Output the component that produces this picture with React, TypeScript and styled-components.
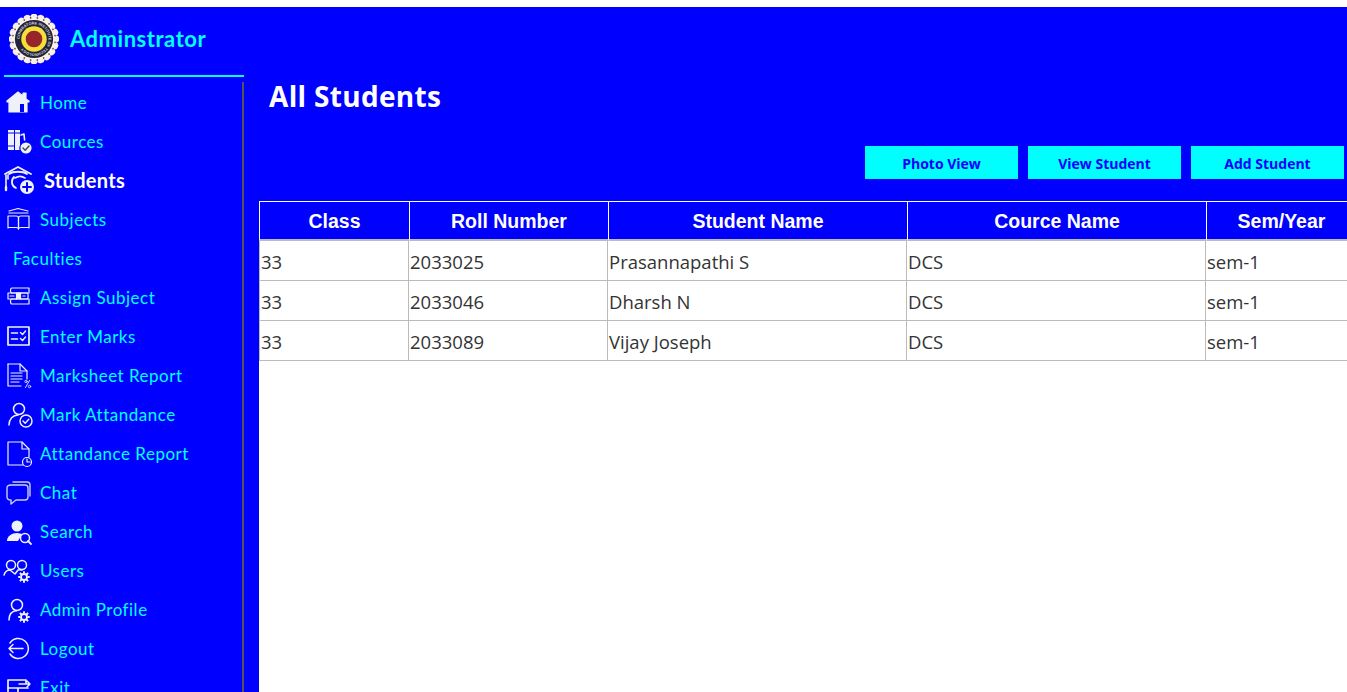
import React from "react";
import styled, { createGlobalStyle } from "styled-components";

const Global = createGlobalStyle`
  html, body { margin: 0; padding: 0; height: 100%; background: #fff; overflow: hidden; }
  #root { height: 100%; }
`;

const Page = styled.div`
  height: 692px;
  padding-top: 7px;
  box-sizing: border-box;
  overflow: hidden;
  background: #fff;
`;
const Shell = styled.div`
  display: flex;
  height: 685px;
  background: #0000ff;
`;
const Sidebar = styled.aside`
  width: 259px;
  flex: none;
  display: flex;
  flex-direction: column;
  overflow: hidden;
`;
const Brand = styled.div`
  height: 68px;
  flex: none;
  display: flex;
  align-items: center;
  gap: 11px;
  padding: 0 0 5px 9px;
  box-sizing: border-box;
`;
const BrandName = styled.span`
  font: 700 22px/1 Lato, "Liberation Sans", sans-serif;
  letter-spacing: 0.53px;
  color: #00ffff;
`;
const Divider = styled.hr`
  width: 240px;
  height: 2px;
  flex: none;
  margin: 0 0 5px 4px;
  border: 0;
  background: #00ffff;
`;
const Nav = styled.nav`
  width: 242px;
  flex: 1 0 auto;
  padding-top: 1px;
  border-right: 2px solid #555;
`;
const NavRow = styled.a<{ $active?: boolean; $plain?: boolean }>`
  display: flex;
  align-items: center;
  height: 39px;
  box-sizing: border-box;
  padding-left: ${(p) => (p.$plain ? "13px" : p.$active ? "4px" : "5px")};
  padding-bottom: ${(p) => (p.$active ? "2px" : "0")};
  gap: ${(p) => (p.$active ? "10px" : "8px")};
  color: ${(p) => (p.$active ? "#fff" : "#00ffff")};
  font: ${(p) => (p.$active ? "700 20px" : "400 17px")}/1 Lato, "Liberation Sans", sans-serif;
  letter-spacing: ${(p) => (p.$active ? "0.3px" : "0.5px")};
  white-space: nowrap;
`;
const IconBox = styled.span<{ $wide?: boolean }>`
  display: flex;
  width: ${(p) => (p.$wide ? "30px" : "27px")};
  height: ${(p) => (p.$wide ? "30px" : "27px")};
  flex: none;
  svg { display: block; width: 100%; height: 100%; overflow: visible; }
`;
const Main = styled.main`
  flex: 1;
  min-width: 0;
  display: flex;
  flex-direction: column;
`;
const Title = styled.h1`
  margin: 0;
  padding: 69px 0 0 10px;
  font: 700 28px/40px "Open Sans", "Liberation Sans", sans-serif;
  letter-spacing: 0.32px;
  color: #fff;
`;
const Toolbar = styled.div`
  display: flex;
  justify-content: flex-end;
  gap: 10px;
  padding: 30px 3px 22px 0;
`;
const ActionButton = styled.button`
  width: 153px;
  height: 33px;
  border: 0;
  padding: 2px 0 0;
  background: #00ffff;
  color: #0000ff;
  font: 700 14px/1 "Open Sans", "Liberation Sans", sans-serif;
`;
const TableArea = styled.div`
  flex: 1;
  background: #fff;
  overflow: hidden;
`;
const Table = styled.table`
  width: 1097px;
  table-layout: fixed;
  border-collapse: separate;
  border-spacing: 0;
`;
const HeadCell = styled.th<{ $w: number }>`
  width: ${(p) => p.$w}px;
  height: 40px;
  padding: 2px 0 0;
  box-sizing: border-box;
  background: #0000ff;
  color: #fff;
  border-top: 1px solid #fff;
  border-left: 1px solid #fff;
  border-bottom: 2px solid #bbb;
  font: 700 19.5px/1 "Liberation Sans", Arial, sans-serif;
  text-align: center;
`;
const Cell = styled.td`
  height: 40px;
  padding: 3px 0 0 1px;
  box-sizing: border-box;
  border-right: 1px solid #bbb;
  border-bottom: 1px solid #bbb;
  color: #333;
  font: 400 18.5px/1 "Open Sans", "Liberation Sans", sans-serif;
  &:first-child { border-left: 1px solid #bbb; }
`;

const Svg: React.FC<{ children: React.ReactNode; vb?: string }> = ({ children, vb = "0 0 27 27" }) => (
  <svg viewBox={vb} fill="none" stroke="#eef2f8" strokeWidth="1.2" strokeLinecap="round" strokeLinejoin="round">
    {children}
  </svg>
);

const Gear: React.FC<{ x: number; y: number }> = ({ x, y }) => (
  <g>
    <circle cx={x} cy={y} r="3" strokeWidth="1.8" />
    {[0, 45, 90, 135, 180, 225, 270, 315].map((a) => (
      <path key={a} d={`M${x} ${y - 3.6}V${y - 5.8}`} strokeWidth="1.9" strokeLinecap="butt" transform={`rotate(${a} ${x} ${y})`} />
    ))}
  </g>
);

const icons: Record<string, React.ReactNode> = {
  home: (
    <Svg>
      <path d="M2 12 13 3l5 4V4h3v6l3 2v1h-2v10H4V13H2z" fill="#eef2f8" />
      <rect x="15" y="15" width="4" height="8" fill="#0000ff" stroke="none" />
    </Svg>
  ),
  courses: (
    <Svg>
      <rect x="3" y="2" width="6" height="20" fill="#eef2f8" stroke="none" />
      <rect x="10" y="2" width="5" height="20" fill="#eef2f8" stroke="none" />
      <path d="M3 5h6M3 18h6M10 5h5" stroke="#0000ff" />
      <path d="M16 7l3-1 .6 6" strokeWidth="1.6" />
      <circle cx="21" cy="20" r="6.200" fill="#eef2f8" stroke="#0000ff" />
      <path d="M18 20l2.200 2.200 3.800-4.200" stroke="#444" strokeWidth="1.4" />
    </Svg>
  ),
  students: (
    <Svg vb="0 0 30 30">
      <path d="M1 9 14 2l13 7" strokeWidth="1.8" />
      <path d="M5 9c4-3 14-3 18 0" strokeWidth="1.8" />
      <path d="M2 10v12M4 10v4" strokeWidth="1.6" />
      <path d="M2 22v3" strokeWidth="2.4" />
      <path d="M10 12c-3 3-3 9 2 11" strokeWidth="1.8" />
      <path d="M11 13c3-2 7-2 10 0" strokeWidth="1.6" />
      <circle cx="23" cy="22" r="7" fill="#eef2f8" stroke="none" />
      <path d="M23 18v8M19 22h8" stroke="#0000ff" strokeWidth="2" />
    </Svg>
  ),
  subjects: (
    <Svg>
      <path d="M4 5 13 2.500 23 5" />
      <path d="M4 7h19" />
      <path d="M3 22V10h8c1.500 0 2.500 1 2.500 2v11c0-1-1-1.500-2.500-1.500H3z" />
      <path d="M24 22V10h-8c-1.500 0-2.500 1-2.500 2v11c0-1 1-1.500 2.500-1.500h8z" />
    </Svg>
  ),
  assign: (
    <Svg>
      <path d="M7 4h17v5H7c-2 0-2-5 0-5z" />
      <path d="M3 9h19c1.500 0 1.500 6 0 6H3z" />
      <path d="M7 15h17v5H7c-2 0-2-5 0-5z" />
      <path d="M11.500 9h4v6l-2-1.500-2 1.500z" fill="#eef2f8" />
      <path d="M5 12h4M18 12h2" />
    </Svg>
  ),
  marks: (
    <Svg>
      <rect x="3" y="4" width="21" height="18" strokeWidth="1.7" />
      <path d="M6.500 10h6M6.500 16h6" strokeWidth="1.6" />
      <path d="m15.500 9.500 2 2 3-3.500M15.500 15.500l2 2 3-3.500" strokeWidth="1.4" />
    </Svg>
  ),
  sheet: (
    <Svg>
      <path d="M3 2h12l7 7v8" />
      <path d="M3 2v22h13" />
      <path d="M15 2v7h7" />
      <path d="M6 11h11M6 14h11M6 17h11M6 20h8" />
      <path d="m24.500 18.500-4 7" strokeWidth=".9" />
      <circle cx="21" cy="19.500" r="1.200" strokeWidth=".8" />
      <circle cx="24.500" cy="24.500" r="1.200" strokeWidth=".8" />
    </Svg>
  ),
  attend: (
    <Svg>
      <circle cx="14" cy="8" r="5.500" strokeWidth="1.5" />
      <path d="M4 24c0-6 4-10 9-10" strokeWidth="1.5" />
      <circle cx="21" cy="20" r="6" fill="#0000ff" strokeWidth="1.500" />
      <path d="m18 20 2.200 2.200 3.600-4" strokeWidth="1.4" />
    </Svg>
  ),
  report: (
    <Svg>
      <path d="M3 2h14l7 7v8M3 2v23h15" />
      <path d="M17 2v7h7" />
      <circle cx="22" cy="22" r="4.500" fill="#0000ff" />
      <path d="M22 19v3h3" />
    </Svg>
  ),
  chat: (
    <Svg>
      <path d="M8 3h14c2 0 3 1 3 3v11" stroke="#c9cfe8" strokeWidth="1.4" />
      <path d="M6 6h14c2 0 3 1 3 3v9c0 2-1 3-3 3H11l-5 4v-4c-3 0-4-1-4-3V9c0-2 2-3 4-3z" stroke="#c9cfe8" strokeWidth="1.4" />
    </Svg>
  ),
  search: (
    <Svg>
      <circle cx="12" cy="8" r="5.500" fill="#eef2f8" stroke="none" />
      <path d="M2 23c0-5 5-8 10-8 2 0 4 1 5 1l-4 7z" fill="#eef2f8" stroke="none" />
      <circle cx="20" cy="20" r="4.500" fill="#0000ff" strokeWidth="1.5" />
      <path d="m23 23 3 3" strokeWidth="1.8" />
    </Svg>
  ),
  users: (
    <Svg>
      <circle cx="6" cy="8" r="4.500" strokeWidth="1.500" />
      <circle cx="17" cy="8" r="4.500" strokeWidth="1.500" />
      <path d="M-1 18c1-3 3-5 6-5l5 4 3-4c2-.5 3 0 4 0" strokeWidth="1.500" />
      <Gear x={19} y={20} />
    </Svg>
  ),
  admin: (
    <Svg>
      <circle cx="12" cy="9" r="5.500" strokeWidth="1.500" />
      <path d="M4 24c0-6 3-9 8-9.500" strokeWidth="1.500" />
      <Gear x={19} y={21} />
    </Svg>
  ),
  logout: (
    <Svg>
      <path d="M5 8a10 10 0 1 1 0 11" strokeWidth="1.500" />
      <path d="M4 13.500h14M8 9.500l-4 4 4 4" strokeWidth="1.500" />
    </Svg>
  ),
  exit: (
    <Svg>
      <path d="M21 9V6H3v16h20" strokeWidth="1.700" />
      <path d="M3 14h20M13 14v8" strokeWidth="1.700" />
      <path d="M14 10h11M22 7l3 3-3 3" strokeWidth="1.500" />
    </Svg>
  ),
};

const navItems: { label: string; icon?: string; active?: boolean }[] = [
  { label: "Home", icon: "home" },
  { label: "Cources", icon: "courses" },
  { label: "Students", icon: "students", active: true },
  { label: "Subjects", icon: "subjects" },
  { label: "Faculties" },
  { label: "Assign Subject", icon: "assign" },
  { label: "Enter Marks", icon: "marks" },
  { label: "Marksheet Report", icon: "sheet" },
  { label: "Mark Attandance", icon: "attend" },
  { label: "Attandance Report", icon: "report" },
  { label: "Chat", icon: "chat" },
  { label: "Search", icon: "search" },
  { label: "Users", icon: "users" },
  { label: "Admin Profile", icon: "admin" },
  { label: "Logout", icon: "logout" },
  { label: "Exit", icon: "exit" },
];

const columns = [
  { name: "Class", w: 150 },
  { name: "Roll Number", w: 199 },
  { name: "Student Name", w: 299 },
  { name: "Cource Name", w: 299 },
  { name: "Sem/Year", w: 150 },
];
const students = [
  ["33", "2033025", "Prasannapathi S", "DCS", "sem-1"],
  ["33", "2033046", "Dharsh N", "DCS", "sem-1"],
  ["33", "2033089", "Vijay Joseph", "DCS", "sem-1"],
];

const scallops = Array.from({ length: 20 }, (_, i) => (i * 360) / 20);

const Logo = () => (
  <svg width="50" height="50" viewBox="0 0 51 51" style={{ flex: "none" }}>
    <defs>
      <path id="logoRing" d="M25.500 25.500m-14.800 0a14.800 14.800 0 1 1 29.600 0a14.800 14.800 0 1 1-29.600 0" />
    </defs>
    {scallops.map((a) => (
      <circle key={a} cx="25.500" cy="3.500" r="3.800" fill="#f5efe8" transform={`rotate(${a} 25.500 25.500)`} />
    ))}
    <circle cx="25.500" cy="25.500" r="22" fill="#f8f4ee" />
    {scallops.map((a) => (
      <circle key={a} cx="25.500" cy="3.800" r="0.900" fill="#8a4a3a" transform={`rotate(${a + 9} 25.500 25.500)`} />
    ))}
    <circle cx="25.500" cy="25.500" r="19.500" fill="#23233a" />
    <text fontSize="3.900" fontWeight="700" fontFamily="Liberation Sans, sans-serif" fill="#d8d8d8">
      <textPath href="#logoRing">COIMBATORE INSTITUTE OF TECHNOLOGY</textPath>
    </text>
    <circle cx="25.500" cy="25.500" r="13" fill="#f7df3a" />
    <circle cx="25.500" cy="25.500" r="8.500" fill="#96262a" />
  </svg>
);

export default function App() {
  return (
    <Page>
      <Global />
      <Shell>
        <Sidebar>
          <Brand>
            <Logo />
            <BrandName>Adminstrator</BrandName>
          </Brand>
          <Divider />
          <Nav>
            {navItems.map((item) => (
              <NavRow key={item.label} $active={item.active} $plain={!item.icon}>
                {item.icon && <IconBox $wide={item.active}>{icons[item.icon]}</IconBox>}
                {item.label}
              </NavRow>
            ))}
          </Nav>
        </Sidebar>
        <Main>
          <Title>All Students</Title>
          <Toolbar>
            <ActionButton>Photo View</ActionButton>
            <ActionButton>View Student</ActionButton>
            <ActionButton>Add Student</ActionButton>
          </Toolbar>
          <TableArea>
            <Table>
              <thead>
                <tr>
                  {columns.map((c) => (
                    <HeadCell key={c.name} $w={c.w}>{c.name}</HeadCell>
                  ))}
                </tr>
              </thead>
              <tbody>
                {students.map((row) => (
                  <tr key={row[1]}>
                    {row.map((v, i) => (
                      <Cell key={i}>{v}</Cell>
                    ))}
                  </tr>
                ))}
              </tbody>
            </Table>
          </TableArea>
        </Main>
      </Shell>
    </Page>
  );
}
